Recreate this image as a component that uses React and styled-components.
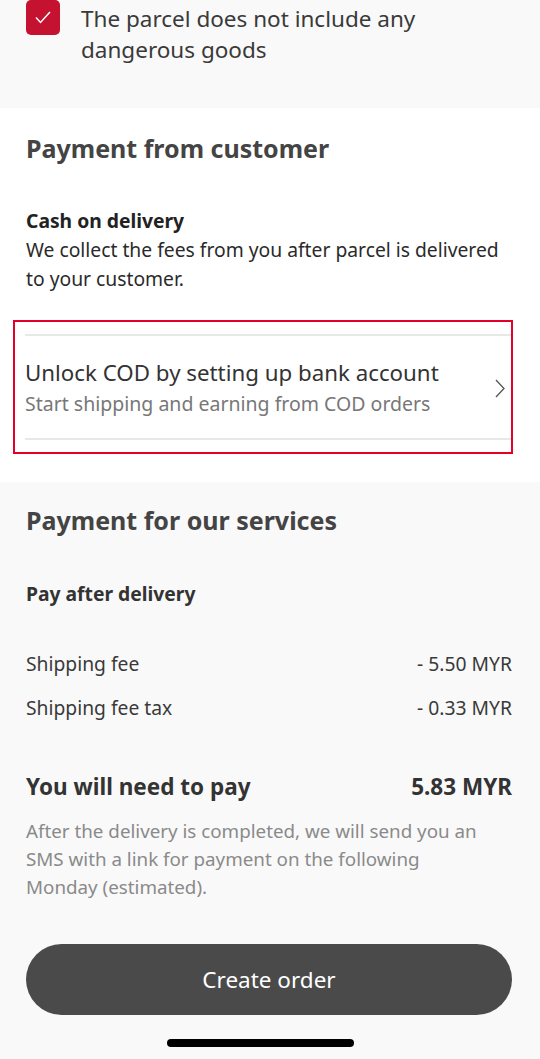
import styled, { createGlobalStyle } from "styled-components";

const GlobalStyle = createGlobalStyle`
    body {
        margin: 0;
        background: #f9f9f9;
        font-family: "Noto Sans", "Open Sans", sans-serif;
        color: #333;
    }
`

const Pagina = styled.div`
    width: 540px;
    height: 1059px;
    overflow: hidden;
    position: relative;
    background: #f9f9f9;
`

const Secao = styled.section`
    background: ${props => props.$branco ? '#fff' : '#f9f9f9'};
    padding: ${props => props.$padding};
`

const LinhaCheck = styled.div`
    display: flex;
    align-items: flex-start;
    gap: 21px;
    padding: 0 60px 0 26px;
`

const Caixa = styled.div`
    width: 34px;
    height: 35px;
    flex-shrink: 0;
    border-radius: 5px;
    background: #c41230;
    display: flex;
    align-items: center;
    justify-content: center;
`

const TextoCheck = styled.p`
    margin: 3px 0 0;
    font-size: 22.5px;
    line-height: 31px;
    color: #3a3a3a;
`

const Titulo = styled.h2`
    margin: 0;
    font-size: 25px;
    font-weight: 700;
    line-height: 32px;
    color: #444;
`

const Subtitulo = styled.h3`
    margin: 0;
    font-size: 19.3px;
    font-weight: 700;
    line-height: 29px;
    color: ${props => props.$cor || '#222'};
`

const Paragrafo = styled.p`
    margin: 0;
    font-size: 19.3px;
    line-height: 29px;
    color: #2a2a2a;
`

const Destaque = styled.div`
    margin: 27px -1px 0 -13px;
    border: 2.5px solid #e4002b;
    padding: 12px 0 12px 10px;
`

const CartaoCod = styled.div`
    border-top: 2px solid #e8e8e8;
    border-bottom: 2px solid #e8e8e8;
    display: flex;
    align-items: center;
    justify-content: space-between;
    padding: 21px 0 18px;
`

const CodTitulo = styled.div`
    font-size: 22.3px;
    line-height: 31px;
    color: #333;
`

const CodSub = styled.div`
    font-size: 19.5px;
    line-height: 32px;
    color: #777;
`

const Linha = styled.div`
    display: flex;
    justify-content: space-between;
    align-items: center;
    font-size: ${props => props.$total ? '22.5px' : '19.3px'};
    font-weight: ${props => props.$total ? 700 : 400};
    line-height: ${props => props.$total ? '32px' : '28px'};
    color: ${props => props.$total ? '#333' : '#3a3a3a'};
    margin-top: ${props => props.$mt || '0px'};
`

const Nota = styled.p`
    margin: 14px 0 0;
    max-width: 460px;
    font-size: 18.8px;
    line-height: 28px;
    color: #8a8a8a;
`

const Botao = styled.button`
    display: block;
    width: 100%;
    height: 71px;
    margin-top: 43px;
    border: none;
    border-radius: 36px;
    background: #4a4a4a;
    color: #fff;
    font-family: "Noto Sans", "Open Sans", sans-serif;
    font-size: 22.5px;
`

const BarraHome = styled.div`
    position: absolute;
    left: 167px;
    top: 1039px;
    width: 187px;
    height: 8px;
    border-radius: 4px;
    background: #000;
`

function App() {
    return (
        <Pagina>
            <GlobalStyle />
            <Secao $padding='0 0 43px'>
                <LinhaCheck>
                    <Caixa>
                        <svg width="16" height="13" viewBox="0 0 16 13">
                            <path d="M1 6.5 L5.5 11.5 L15 1" fill="none" stroke="#fff" strokeWidth="1.5" />
                        </svg>
                    </Caixa>
                    <TextoCheck>The parcel does not include any dangerous goods</TextoCheck>
                </LinhaCheck>
            </Secao>
            <Secao $branco $padding='24px 28px 28px 26px'>
                <Titulo>Payment from customer</Titulo>
                <Subtitulo style={{ marginTop: '42px' }}>Cash on delivery</Subtitulo>
                <Paragrafo>We collect the fees from you after parcel is delivered to your customer.</Paragrafo>
                <Destaque>
                    <CartaoCod>
                        <div>
                            <CodTitulo>Unlock COD by setting up bank account</CodTitulo>
                            <CodSub>Start shipping and earning from COD orders</CodSub>
                        </div>
                        <svg width="10" height="19" viewBox="0 0 10 19" style={{ marginRight: '6px' }}>
                            <path d="M1 1 L9 9.5 L1 18" fill="none" stroke="#555" strokeWidth="1.3" />
                        </svg>
                    </CartaoCod>
                </Destaque>
            </Secao>
            <Secao $padding='22px 28px 0 26px'>
                <Titulo>Payment for our services</Titulo>
                <Subtitulo $cor='#333' style={{ marginTop: '43px' }}>Pay after delivery</Subtitulo>
                <Linha $mt='42px'><span>Shipping fee</span><span>- 5.50 MYR</span></Linha>
                <Linha $mt='16px'><span>Shipping fee tax</span><span>- 0.33 MYR</span></Linha>
                <Linha $total $mt='49px'><span>You will need to pay</span><span>5.83 MYR</span></Linha>
                <Nota>After the delivery is completed, we will send you an SMS with a link for payment on the following Monday (estimated).</Nota>
                <Botao>Create order</Botao>
            </Secao>
            <BarraHome />
        </Pagina>
    )
}

export default App;
